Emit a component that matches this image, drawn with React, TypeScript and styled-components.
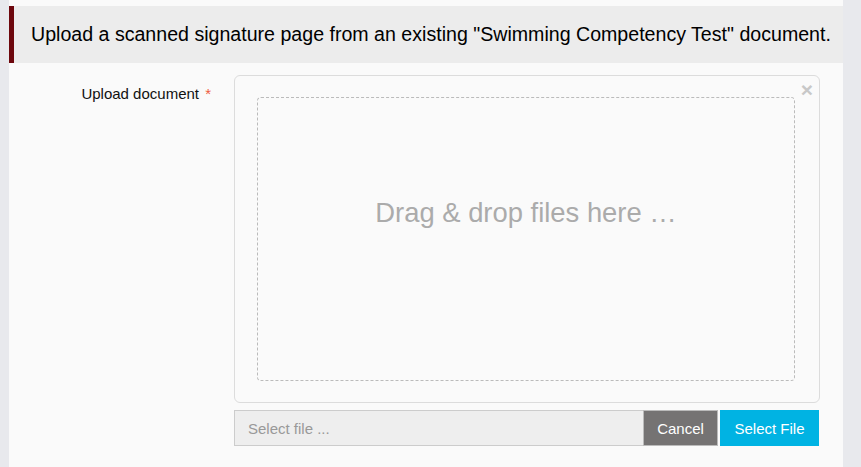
import React from "react";
import styled, { createGlobalStyle } from "styled-components";

const Global = createGlobalStyle`
  html, body { margin: 0; padding: 0; background: #fafafa; }
  body { font-family: "Liberation Sans", Arial, sans-serif; }
  * { box-sizing: border-box; }
`;

const Page = styled.div`
  display: flex;
  width: 861px;
  height: 467px;
  overflow: hidden;
`;

const SideStrip = styled.div<{ $w: number }>`
  width: ${(p) => p.$w}px;
  flex: none;
  background: #e8e9ed;
`;

const Main = styled.div`
  flex: 1;
  background: #fafafa;
  padding-top: 6px;
  display: flex;
  flex-direction: column;
`;

const Header = styled.div`
  height: 57px;
  background: #ececec;
  border-left: 5px solid #6d070d;
  display: flex;
  align-items: center;
  padding-left: 17px;
  font-size: 19.6px;
  color: #000;
  white-space: nowrap;
`;

const FormRow = styled.div`
  display: flex;
  margin-top: 12px;
`;

const LabelCol = styled.div`
  width: 225px;
  flex: none;
  padding-right: 23px;
  padding-top: 10px;
  text-align: right;
  font-size: 15px;
  color: #111;
`;

const Req = styled.span`
  color: #ee5a40;
  margin-left: 2px;
`;

const FieldCol = styled.div`
  width: 586px;
  display: flex;
  flex-direction: column;
  gap: 7px;
`;

const DropZone = styled.div`
  position: relative;
  height: 328px;
  border: 1px solid #dcdcdc;
  border-radius: 6px;
  background: #fafafa;
  padding: 21px 24px 21px 22px;
  display: flex;
`;

const Close = styled.span`
  position: absolute;
  top: 3px;
  right: 6px;
  font-size: 21px;
  font-weight: bold;
  color: #c8c8c8;
  line-height: 1;
`;

const DropArea = styled.div`
  flex: 1;
  border: 1px dashed #bbb;
  border-radius: 4px;
  display: flex;
  align-items: center;
  justify-content: center;
  font-size: 27.4px;
  color: #ababab;
  padding-bottom: 52px;
`;

const InputGroup = styled.div`
  display: flex;
  height: 36px;
  width: 585px;
`;

const FileInput = styled.div`
  flex: 1;
  background: #eeeeee;
  border: 1px solid #cccccc;
  border-right: none;
  display: flex;
  align-items: center;
  padding-left: 13px;
  font-size: 15px;
  color: #999;
`;

const Btn = styled.div<{ $bg: string; $w: number; $border: string; $gap: number }>`
  width: ${(p) => p.$w}px;
  margin-left: ${(p) => p.$gap}px;
  background: ${(p) => p.$bg};
  border: 1px solid ${(p) => p.$border};
  color: #fff;
  font-size: 15px;
  display: flex;
  align-items: center;
  justify-content: center;
`;

export default function App() {
  return (
    <>
      <Global />
      <Page>
        <SideStrip $w={9} />
        <Main>
          <Header>
            Upload a scanned signature page from an existing "Swimming Competency Test" document.
          </Header>
          <FormRow>
            <LabelCol>
              Upload document <Req>*</Req>
            </LabelCol>
            <FieldCol>
              <DropZone>
                <Close>×</Close>
                <DropArea>Drag &amp; drop files here …</DropArea>
              </DropZone>
              <InputGroup>
                <FileInput>Select file ...</FileInput>
                <Btn $bg="#757373" $w={75} $border="#bbb" $gap={0}>Cancel</Btn>
                <Btn $bg="#00b3e3" $w={99} $border="#00b3e3" $gap={2}>
                  Select File
                </Btn>
              </InputGroup>
            </FieldCol>
          </FormRow>
        </Main>
        <SideStrip $w={18} />
      </Page>
    </>
  );
}
